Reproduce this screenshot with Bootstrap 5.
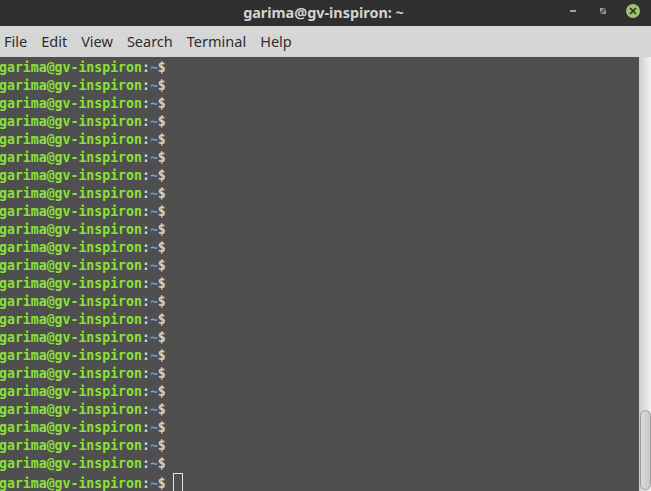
<!DOCTYPE html>
<html lang="en">
<head>
<meta charset="utf-8">
<title>garima@gv-inspiron: ~</title>
<link href="https://cdn.jsdelivr.net/npm/bootstrap@5.3.0/dist/css/bootstrap.min.css" rel="stylesheet">
<style>
html,body{height:100%;overflow:hidden;background:#4f4f4f}
.win{height:491px;width:651px}
.tbar{height:26px;background:#2f2f2f;flex:none;position:relative}
.ttl{font:bold 14.4px "Noto Sans",sans-serif;color:#d3d3d3;line-height:26px;margin-left:-4px}
.ctl{position:absolute;top:0;left:0;width:651px;height:26px}
.mbar{height:31px;background:#d6d6d6;flex:none;padding-left:4px;gap:14px;font:14.5px "Noto Sans",sans-serif;color:#2e2e2e;line-height:31px}
.term{flex:1;min-height:0;background:#4f4f4f}
.out{flex:1;margin:0;padding-top:2px;font:bold 13.2px/18px "DejaVu Sans Mono",monospace;color:#8ae234;overflow:hidden;margin-left:-1px}
.pl{display:block;height:18px;white-space:pre}
.sep{color:#d3d7cf}.til{color:#729fcf}
.cur{display:inline-block;width:10px;height:20px;border:1px solid #e4e4e4;vertical-align:-5px;margin-left:7px}
.sbar{width:12px;flex:none;background:linear-gradient(90deg,#cfcfcf,#f2f2f2);position:relative}
.thumb{position:absolute;left:1px;right:0;top:353px;bottom:1px;background:linear-gradient(90deg,#dcdcdc,#c8c8c8);border:1px solid #9a9a9a;border-radius:6px}
</style>
</head>
<body>
<div class="win d-flex flex-column">
  <div class="tbar d-flex justify-content-center">
    <div class="ttl">garima@gv-inspiron: ~</div>
    <svg class="ctl" viewBox="0 0 651 26" aria-hidden="true">
      <rect x="570" y="10" width="6" height="2" fill="#a0a0a0"/>
      <rect x="600" y="8" width="6" height="6" fill="#5c5c5c"/>
      <path d="M600 8h4l-4 4zM606 14h-4l4-4z" fill="#9a9a9a"/>
      <circle cx="633" cy="11" r="7" fill="#9bc46e"/>
      <path d="M630 8l6 6M636 8l-6 6" stroke="#2f2f2f" stroke-width="1.7"/>
    </svg>
  </div>
  <div class="mbar d-flex"><span>File</span><span>Edit</span><span>View</span><span>Search</span><span>Terminal</span><span>Help</span></div>
  <div class="term d-flex">
    <div class="out" id="o"></div>
    <div class="sbar"><div class="thumb"></div></div>
  </div>
</div>
<script>
var h='';
for(var i=0;i<24;i++){
  h+='<span class="pl">garima@gv-inspiron<span class="sep">:</span><span class="til">~</span><span class="sep">$</span>'+(i==23?'<span class="cur"></span>':'')+'</span>';
}
document.getElementById('o').innerHTML=h;
</script>
</body>
</html>
